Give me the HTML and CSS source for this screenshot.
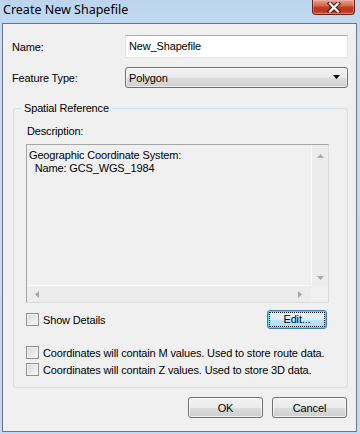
FILE: index.html
```html
<!DOCTYPE html>
<html lang="en">
<head>
    <meta charset="UTF-8">
    <meta name="viewport" content="width=device-width, initial-scale=1.0">
    <title>Create New Shapefile</title>
    <link rel="stylesheet" href="styles.css">
</head>
<body>
    <div class="window">
        <div class="titlebar">
            <span class="title">Create New Shapefile</span>
            <span class="close">
                <svg width="16" height="11" viewBox="0 0 16 11">
                    <path d="M4 1.5 L12 9.5 M12 1.5 L4 9.5" stroke="#4a1810" stroke-width="4.4" stroke-linecap="square"/>
                    <path d="M4 1.5 L12 9.5 M12 1.5 L4 9.5" stroke="#fff" stroke-width="2.2" stroke-linecap="square"/>
                </svg>
            </span>
        </div>
        <div class="client">
            <div class="row row-name">
                <span class="label">Name:</span>
                <div class="textbox">New_Shapefile</div>
            </div>
            <div class="row row-type">
                <span class="label">Feature Type:</span>
                <div class="combo">
                    <span>Polygon</span>
                    <svg width="8" height="5" viewBox="0 0 8 5"><path d="M0 0 H7 L3.5 4 Z" fill="#000"/></svg>
                </div>
            </div>

            <fieldset class="group">
                <legend>Spatial Reference</legend>
                <div class="desc-label">Description:</div>
                <div class="desc-box">
                    <div class="desc-main">
                        <div class="desc-text">Geographic Coordinate System:<br>&nbsp;&nbsp;Name: GCS_WGS_1984</div>
                        <div class="vscroll">
                            <svg width="7" height="4" viewBox="0 0 7 4"><path d="M0 4 L3.5 0 L7 4 Z" fill="#a8a8a8"/></svg>
                            <svg width="7" height="4" viewBox="0 0 7 4"><path d="M0 0 L3.5 4 L7 0 Z" fill="#a8a8a8"/></svg>
                        </div>
                    </div>
                    <div class="desc-bottom">
                        <div class="hscroll">
                            <svg width="4" height="7" viewBox="0 0 4 7"><path d="M4 0 L0 3.5 L4 7 Z" fill="#a8a8a8"/></svg>
                            <svg width="4" height="7" viewBox="0 0 4 7"><path d="M0 0 L4 3.5 L0 7 Z" fill="#a8a8a8"/></svg>
                        </div>
                        <div class="corner"></div>
                    </div>
                </div>

                <div class="details-row">
                    <label class="check"><span class="box"></span>Show Details</label>
                    <button class="btn btn-edit"><span class="focus">Edit...</span></button>
                </div>
                <label class="check check-m"><span class="box"></span>Coordinates will contain M values. Used to store route data.</label>
                <label class="check"><span class="box"></span>Coordinates will contain Z values. Used to store 3D data.</label>
            </fieldset>

            <div class="actions">
                <button class="btn">OK</button>
                <button class="btn">Cancel</button>
            </div>
        </div>
    </div>
</body>
</html>
```

FILE: styles.css
```css
body {
    margin: 0;
    font-family: 'Liberation Sans', Arial, sans-serif;
    font-size: 11px;
    letter-spacing: -0.15px;
    color: #000;
}
.window {
    width: 360px;
    height: 434px;
    box-sizing: border-box;
    background: linear-gradient(#bcd4ee, #c6dcf3 40px, #c4daf2);
    padding: 0 3px 2px 2px;
    display: flex;
    flex-direction: column;
}
.titlebar {
    height: 23px;
    display: flex;
    justify-content: space-between;
    align-items: flex-start;
    flex-shrink: 0;
}
.title {
    font-family: 'Noto Sans', 'DejaVu Sans', sans-serif;
    font-size: 12.5px;
    letter-spacing: 0;
    line-height: 20px;
    padding-left: 1px;
    color: #000;
}
.close {
    width: 43px;
    height: 15px;
    box-sizing: border-box;
    margin-right: 2px;
    border: 1px solid #6e2217;
    border-top: none;
    border-radius: 0 0 4px 4px;
    background: linear-gradient(#e8a08c, #d66a50 40%, #c43a22 52%, #bd3520 80%, #d2583c);
    box-shadow: inset 0 0 0 1px rgba(255, 210, 200, 0.35);
    display: flex;
    align-items: center;
    justify-content: center;
}
.client {
    flex: 1;
    background-color: #f0f0f0;
    border: 1px solid #6b7585;
    padding: 0 8px 0 10px;
    display: flex;
    flex-direction: column;
}
.row {
    display: flex;
    align-items: center;
}
.label {
    width: 112px;
    margin-left: -1px;
    padding-right: 1px;
}
.row-name {
    margin-top: 11px;
    height: 23px;
}
.row-type {
    margin-top: 9px;
    height: 21px;
}
.textbox {
    width: 223px;
    height: 23px;
    box-sizing: border-box;
    background-color: #fff;
    border: 1px solid #dde5ee;
    border-top-color: #abadb3;
    padding: 4px 0 0 3px;
}
.combo {
    width: 223px;
    height: 21px;
    box-sizing: border-box;
    border: 1px solid #707070;
    border-radius: 3px;
    background: linear-gradient(#f2f2f2, #ebebeb 50%, #dddddd 51%, #cfcfcf);
    box-shadow: inset 0 0 0 1px rgba(255, 255, 255, 0.6);
    display: flex;
    align-items: center;
    justify-content: space-between;
    padding: 0 6px 0 3px;
}
.group {
    margin: 14px 0 0 0;
    padding: 0 18px 9px 12px;
    border: 1px solid #d5dfe5;
    border-radius: 3px;
    min-width: 0;
}
.group legend {
    padding: 0 3px;
    margin-left: -5px;
    line-height: 13px;
}
.desc-label {
    margin-top: 10px;
    line-height: 13px;
    padding-left: 1px;
}
.desc-box {
    margin-top: 6px;
    height: 159px;
    box-sizing: border-box;
    border: 1px solid #a6a6a6;
    border-right-color: #dcdcdc;
    border-bottom-color: #dcdcdc;
    display: flex;
    flex-direction: column;
}
.desc-main {
    flex: 1;
    display: flex;
}
.desc-text {
    flex: 1;
    padding: 4px 0 0 2px;
    line-height: 13px;
    white-space: nowrap;
}
.vscroll {
    width: 16px;
    background-color: #ececec;
    border-left: 1px solid #fafafa;
    display: flex;
    flex-direction: column;
    justify-content: space-between;
    align-items: center;
    padding: 9px 0 5px;
}
.desc-bottom {
    height: 17px;
    display: flex;
}
.hscroll {
    flex: 1;
    background-color: #ececec;
    border-top: 1px solid #fafafa;
    display: flex;
    justify-content: space-between;
    align-items: center;
    padding: 0 9px 0 8px;
}
.corner {
    width: 17px;
    background-color: #f0f0f0;
}
.details-row {
    margin-top: 7px;
    display: flex;
    justify-content: space-between;
    align-items: center;
    padding-right: 2px;
}
.check {
    display: flex;
    align-items: center;
    height: 17px;
    white-space: nowrap;
}
.check-m {
    margin-top: 15px;
}
.box {
    flex-shrink: 0;
    width: 13px;
    height: 13px;
    box-sizing: border-box;
    border: 1px solid #8e8f8f;
    background: linear-gradient(135deg, #d8d8d8, #f7f7f7);
    box-shadow: inset 0 0 0 1px #f4f4f4;
    margin-right: 4px;
}
.btn {
    font-family: 'Liberation Sans', Arial, sans-serif;
    font-size: 11px;
    letter-spacing: -0.15px;
    color: #000;
    width: 75px;
    height: 21px;
    padding: 0;
    border: 1px solid #707070;
    border-radius: 3px;
    background: linear-gradient(#f2f2f2, #ebebeb 50%, #dddddd 51%, #cfcfcf);
    box-shadow: inset 0 0 0 1px rgba(255, 255, 255, 0.7);
}
.btn-edit {
    width: 60px;
    height: 19px;
    border-color: #3c7fb1;
    background: linear-gradient(#eaf6fd, #d9f0fc 50%, #bee6fd 51%, #a7d9f5);
    box-shadow: inset 0 0 0 1px #48d4f9;
    padding: 2px;
}
.focus {
    display: block;
    height: 100%;
    box-sizing: border-box;
    outline: 1px dotted #000;
    line-height: 13px;
}
.actions {
    margin-top: 9px;
    display: flex;
    justify-content: flex-end;
    gap: 9px;
    padding-right: 1px;
}
```
